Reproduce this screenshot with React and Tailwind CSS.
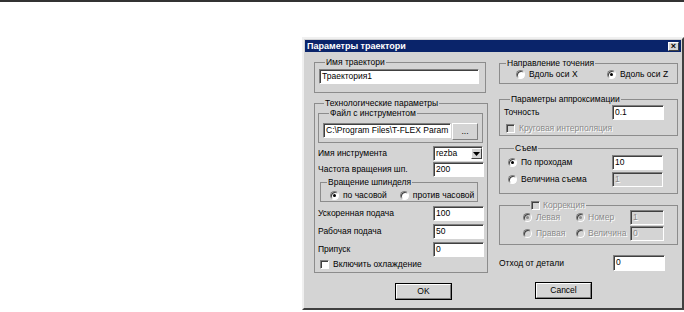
import React from 'react';

const sunken = 'border border-t-[#808080] border-l-[#808080] border-b-white border-r-white shadow-[inset_1px_1px_0_#404040]';
const dim = 'text-[#8a8a8a] [text-shadow:1px_1px_0_#fff]';

const Group = ({ title, className = '', children }) => (
  <fieldset className={`border border-[#8c8c8c] ${className}`}>
    <legend className="ml-[6px] px-[1px] leading-[10px] whitespace-nowrap">{title}</legend>
    {children}
  </fieldset>
);

const Box = ({ value, className = '', disabled }) => (
  <div className={`h-[15px] ${sunken} ${disabled ? `bg-[#d4d4d4] ${dim}` : 'bg-white'} pl-[2px] leading-[12px] whitespace-nowrap ${className}`}>
    {value}
  </div>
);

const Radio = ({ checked, disabled }) => (
  <span className={`w-[9px] h-[9px] rounded-full ${sunken} ${disabled ? 'bg-[#d4d4d4]' : 'bg-white'} flex items-center justify-center shrink-0`}>
    {checked && <span className={`w-[3px] h-[3px] rounded-full ${disabled ? 'bg-[#8a8a8a]' : 'bg-black'}`} />}
  </span>
);

const Check = ({ disabled }) => (
  <span className={`w-[9px] h-[9px] ${sunken} ${disabled ? 'bg-[#d4d4d4]' : 'bg-white'} shrink-0`} />
);

const Button = ({ label, className = '' }) => (
  <div className={`h-[17px] bg-[#d4d4d4] border border-black flex ${className}`}>
    <div className="flex-1 border border-t-white border-l-white border-b-[#808080] border-r-[#808080] flex items-center justify-center">
      {label}
    </div>
  </div>
);

const Row = ({ label, children, className = '' }) => (
  <div className={`flex items-center justify-between whitespace-nowrap ${className}`}>
    <span>{label}</span>
    {children}
  </div>
);

export default function App() {
  return (
    <div className="w-[684px] h-[312px] bg-white overflow-hidden text-[8.5px] text-black font-['Liberation_Sans',Arial,sans-serif]">
      <div className="h-[2px] bg-[#333]" />
      <div className="pl-[302px] pt-[35px]">
        <div className="w-[382px] h-[273px] bg-[#d4d4d4] border-2 border-t-[#f0f0f0] border-l-[#f0f0f0] border-b-[#404040] border-r-[#404040] p-[1px]">
          <div className="h-[12px] bg-[#0a246a] flex items-center justify-between pl-[2px] pr-[2px]">
            <span className="text-white font-bold text-[9px] leading-[10px]">Параметры траектори</span>
            <span className="w-[11px] h-[9px] bg-[#d4d4d4] border border-t-white border-l-white border-b-[#404040] border-r-[#404040] flex items-center justify-center text-[9px] font-bold leading-[7px]">×</span>
          </div>

          <div className="flex pl-[9px] pt-[5px] gap-[13px]">
            {/* left column */}
            <div className="w-[172px] flex flex-col">
              <Group title="Имя траектори" className="pl-[4px] pr-[6px] pb-[8px]">
                <Box value="Траектория1" className="mt-[2px]" />
              </Group>

              <Group title="Технологические параметры" className="mt-[5px] px-[3px] pb-[3px]">
                <Group title="Файл с инструментом" className="mr-[1px] pl-[4px] pr-[4px] pb-[2px]">
                  <div className="flex mt-[5px]">
                    <Box value="C:\Program Files\T-FLEX Param" className="w-[128px] overflow-hidden" />
                    <Button label="..." className="ml-[1px] w-[26px] h-[15px] border-0" />
                  </div>
                </Group>
                <Row label="Имя инструмента" className="mt-[3px] pr-[1px]">
                  <div className={`w-[50px] h-[15px] ${sunken} bg-white flex items-center justify-between pl-[2px]`}>
                    <span>rezba</span>
                    <span className="w-[11px] h-[11px] bg-[#d4d4d4] border border-t-white border-l-white border-b-[#404040] border-r-[#404040] flex items-center justify-center">
                      <svg width="7" height="4" viewBox="0 0 7 4"><path d="M0 0h7L3.5 4z" fill="#000" /></svg>
                    </span>
                  </div>
                </Row>
                <Row label="Частота вращения шп." className="mt-[1px]">
                  <Box value="200" className="w-[51px]" />
                </Row>
                <Group title="Вращение шпинделя" className="ml-[2px] mr-[6px] pb-[1px]">
                  <div className="flex items-center h-[10px] mt-[3px] whitespace-nowrap">
                    <span className="ml-[9px]"><Radio checked /></span>
                    <span className="ml-[4px]">по часовой</span>
                    <span className="ml-[13px]"><Radio /></span>
                    <span className="ml-[4px]">против часовой</span>
                  </div>
                </Group>
                <Row label="Ускоренная подача" className="mt-[4px]">
                  <Box value="100" className="w-[51px]" />
                </Row>
                <Row label="Рабочая подача" className="mt-[3px]">
                  <Box value="50" className="w-[51px]" />
                </Row>
                <Row label="Припуск" className="mt-[3px]">
                  <Box value="0" className="w-[51px]" />
                </Row>
                <div className="flex items-center h-[10px] mt-[2px] ml-[2px] whitespace-nowrap">
                  <Check />
                  <span className="ml-[4px]">Включить охлаждение</span>
                </div>
              </Group>

              <Button label="OK" className="ml-[81px] w-[57px] mt-[10px]" />
            </div>

            {/* right column */}
            <div className="w-[179px] flex flex-col">
              <Group title="Направление точения" className="mt-[1px] pb-[4px]">
                <div className="flex items-center h-[10px] mt-[1px] whitespace-nowrap">
                  <span className="ml-[16px]"><Radio /></span>
                  <span className="ml-[4px] w-[78px]">Вдоль оси X</span>
                  <Radio checked />
                  <span className="ml-[4px]">Вдоль оси Z</span>
                </div>
              </Group>

              <Group title="Параметры аппроксимации" className="mt-[10px] pl-[4px] pr-[13px] pb-[2px]">
                <Row label="Точность" className="mt-[1px]">
                  <Box value="0.1" className="w-[52px]" />
                </Row>
                <div className="flex items-center h-[10px] mt-[3px] ml-[2px] whitespace-nowrap">
                  <Check disabled />
                  <span className={`ml-[4px] ${dim}`}>Круговая интерполяция</span>
                </div>
              </Group>

              <Group title="Съем" className="mt-[7px] pl-[8px] pr-[14px] pb-[6px]">
                <Row className="mt-[2px]" label={<span className="flex items-center"><Radio checked /><span className="ml-[4px]">По проходам</span></span>}>
                  <Box value="10" className="w-[51px]" />
                </Row>
                <Row className="mt-[2px]" label={<span className="flex items-center"><Radio /><span className="ml-[4px]">Величина съема</span></span>}>
                  <Box value="1" disabled className="w-[51px]" />
                </Row>
              </Group>

              <fieldset className="border border-[#8c8c8c] mt-[6px] pl-[23px] pr-[13px] pb-[3px]">
                <legend className="ml-[7px] px-[1px] leading-[10px] flex items-center whitespace-nowrap">
                  <Check disabled />
                  <span className={`ml-[3px] ${dim}`}>Коррекция</span>
                </legend>
                <div className="flex items-center whitespace-nowrap">
                  <Radio checked disabled />
                  <span className={`ml-[4px] w-[40px] ${dim}`}>Левая</span>
                  <Radio checked disabled />
                  <span className={`ml-[3px] ${dim}`}>Номер</span>
                  <Box value="1" disabled className="ml-auto w-[34px]" />
                </div>
                <div className="flex items-center mt-[1px] whitespace-nowrap">
                  <Radio disabled />
                  <span className={`ml-[4px] w-[40px] ${dim}`}>Правая</span>
                  <Radio disabled />
                  <span className={`ml-[3px] ${dim}`}>Величина</span>
                  <Box value="0" disabled className="ml-auto w-[34px]" />
                </div>
              </fieldset>

              <Row label="Отход от детали" className="mt-[10px] pr-[13px]">
                <Box value="0" className="w-[52px] h-[16px]" />
              </Row>

              <Button label="Cancel" className="ml-[36px] w-[57px] mt-[11px]" />
            </div>
          </div>
        </div>
      </div>
    </div>
  );
}
